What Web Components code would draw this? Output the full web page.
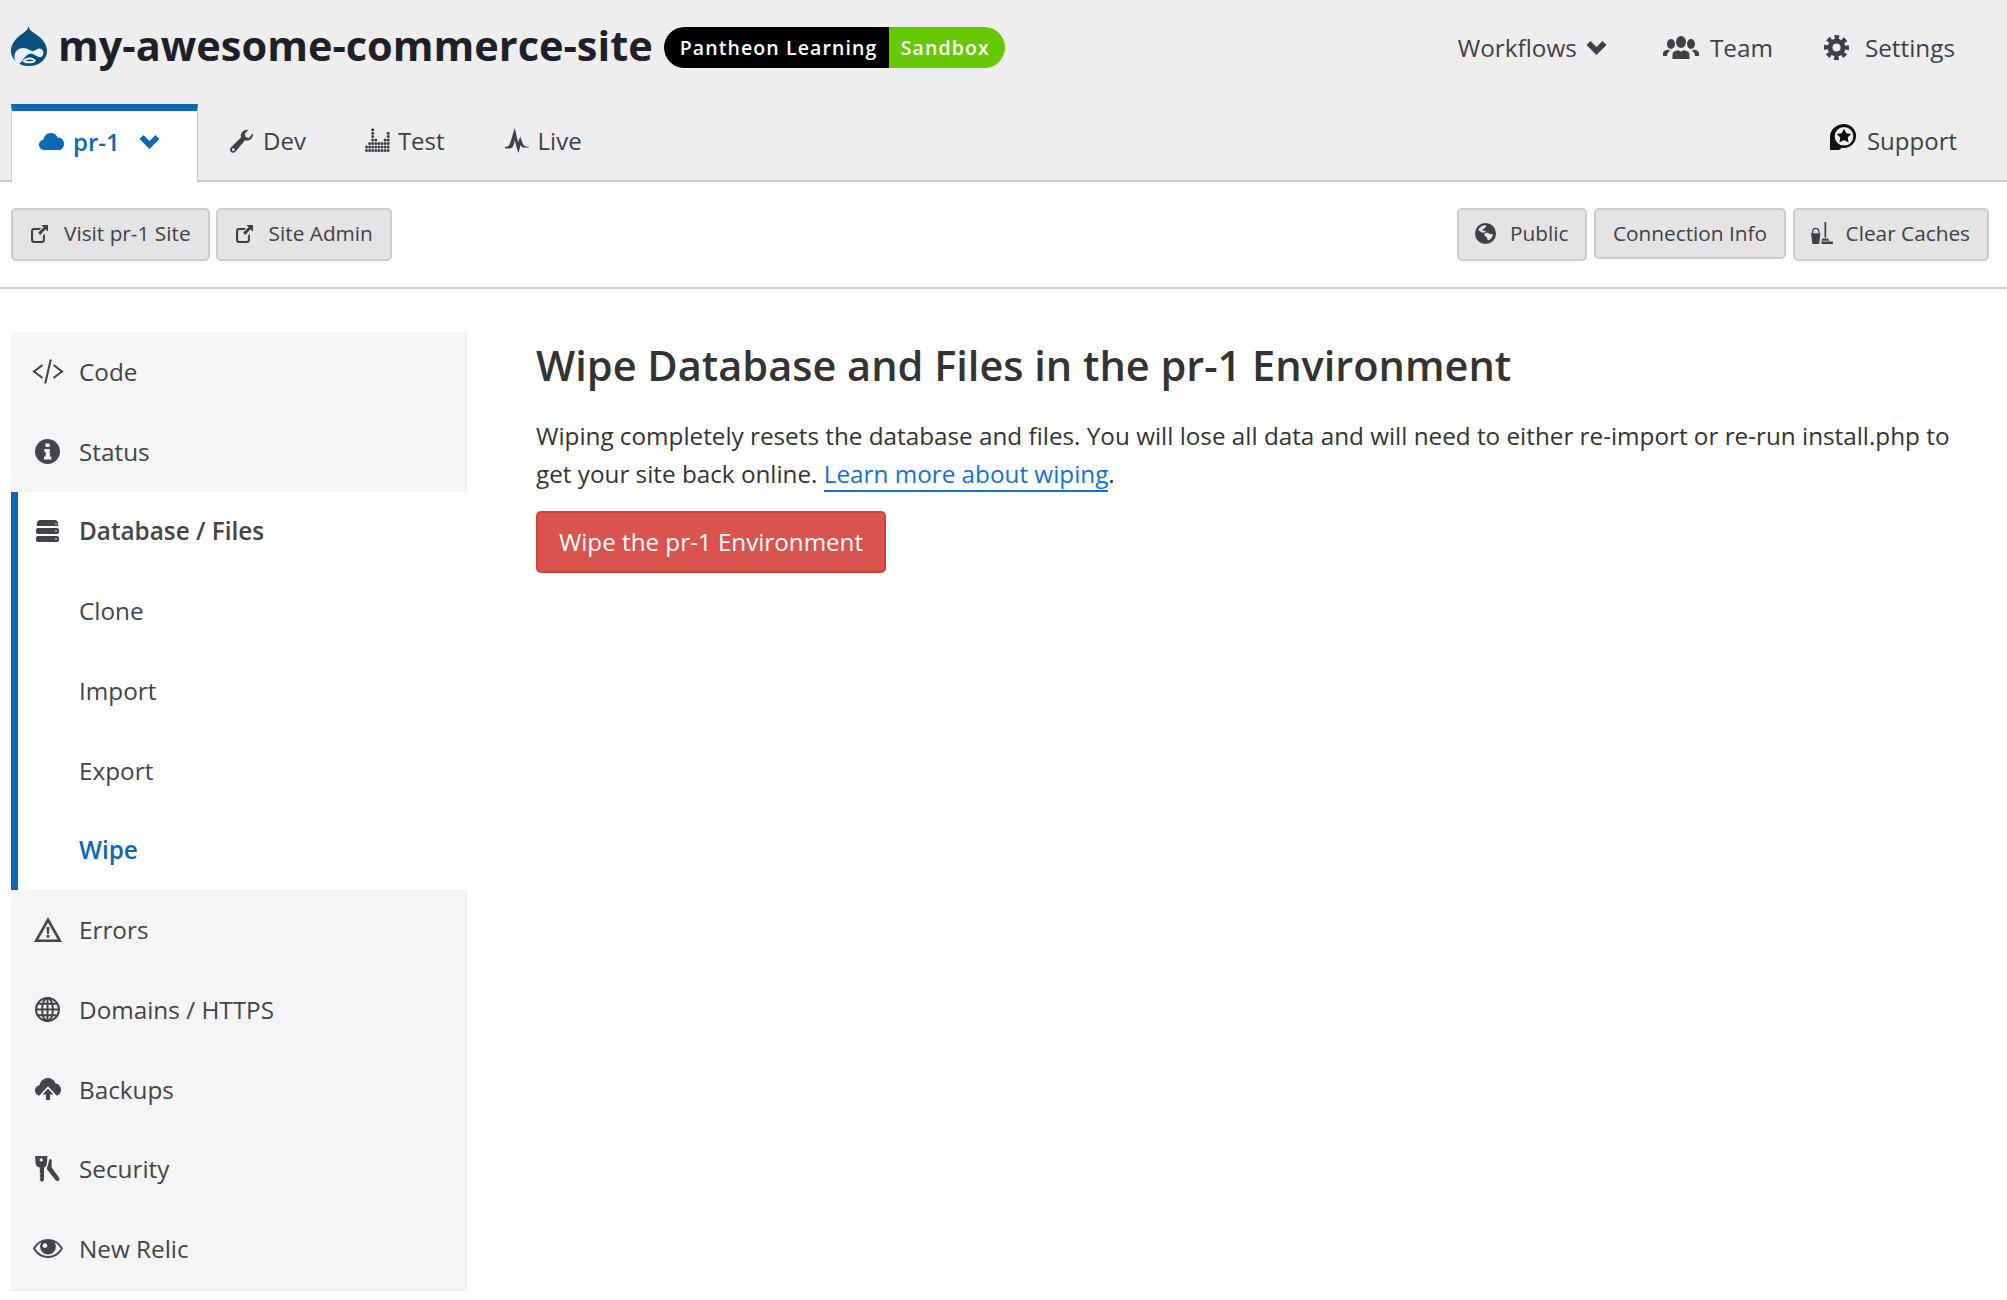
<!DOCTYPE html>
<html lang="en">
<head>
<meta charset="utf-8">
<title>my-awesome-commerce-site</title>
<style>
  html, body { margin: 0; background: #fff; }
  body { font-family: "Open Sans", "Liberation Sans", sans-serif; color: #3c3c3c; min-height: 1300px; }
</style>
</head>
<body>
<site-header></site-header>
<env-toolbar>
  <tool-button slot="left" icon="external" icon-w="17" gap="16">Visit pr-1 Site</tool-button>
  <tool-button slot="left" icon="external" icon-w="17" gap="16">Site Admin</tool-button>
  <tool-button slot="right" icon="earth" icon-w="21" gap="14" style="padding-left:16px">Public</tool-button>
  <tool-button slot="right" slim>Connection Info</tool-button>
  <tool-button slot="right" icon="broom" icon-w="22" gap="13" style="padding-left:16px">Clear Caches</tool-button>
</env-toolbar>
<work-space>
  <side-nav slot="nav">
    <nav-group>
      <nav-item icon="code">Code</nav-item>
      <nav-item icon="info">Status</nav-item>
    </nav-group>
    <nav-group active>
      <nav-item icon="database" strong>Database / Files</nav-item>
      <nav-item>Clone</nav-item>
      <nav-item>Import</nav-item>
      <nav-item>Export</nav-item>
      <nav-item current>Wipe</nav-item>
    </nav-group>
    <nav-group>
      <nav-item icon="warning">Errors</nav-item>
      <nav-item icon="globe">Domains / HTTPS</nav-item>
      <nav-item icon="cloud-up">Backups</nav-item>
      <nav-item icon="keys">Security</nav-item>
      <nav-item icon="eye">New Relic</nav-item>
    </nav-group>
  </side-nav>
  <wipe-panel></wipe-panel>
</work-space>

<script>
const ICONS = {
  drupal: ['0 0 36 40', `
    <path fill="#0a4f7e" d="M17.500 0c.3 3 2.500 5 5.500 7C30 11.500 36 17 36 25c0 8.800-8 15-18 15S0 33.800 0 25c0-7.500 5-13 11-17 3.500-2.300 6-4.500 6.500-8z"/>
    <path fill="#eef2f5" d="M8 38.500C3.500 36 3.200 32 3.500 29.500c.6-4.800 4.500-7.500 9-7.500 4 0 7 3.200 9.500 3 2.800-.2 4.500-3 7.500-2.300 2.800.7 3.800 4.500 2 7-1.800 2.400-4.500 1.300-6.800-.2-3-2-6.200-2.300-8.800-.3-2.500 2-3.500 4.300-4.300 5.300-.8 1-1.900 2-3.600 3.500z"/>
    <path fill="#eef2f5" d="M12 34.500c2.500-3.300 8-4.300 12-1.300 1.400 1 .9 2.500-1 3.200-3.300 1.200-7.500 1.200-10 0-1.300-.6-1.600-1.200-1-1.900z"/>
    <path fill="#0a4f7e" d="M14 34.600c2.800-1.500 6.200-1.700 9 0-2.800.9-6.200.9-9 0z"/>`],
  cloud: ['0 0 25 17', `<path fill="currentColor" d="M5.500 17C2.400 17 0 14.700 0 11.800c0-2.500 1.800-4.500 4.200-5C5 2.900 8 0 11.800 0c3.300 0 6 2 7 4.900.4-.1.800-.1 1.200-.1 2.800 0 5 2.700 5 6.100S22.600 17 19.800 17z"/>`],
  chevron: ['0 0 21 15', `<path fill="none" stroke="currentColor" stroke-width="5.600" d="M2.500 3l8 8 8-8"/>`],
  wrench: ['0 0 23 25', `<path fill="currentColor" fill-rule="evenodd" d="M22.700 5.200c.5 2.300-.2 4.600-1.900 6-1.600 1.400-3.800 1.700-5.700 1L5.600 23.600c-1.200 1.400-3.300 1.600-4.600.4-1.400-1.200-1.400-3.200-.2-4.500L11 9.600c-.6-2-.1-4.200 1.500-5.800C14 2 16.300 1.300 18.500 1.800l-3.700 3.800.8 3.500 3.400.9zM3.300 20.300a1.400 1.400 0 1 0 0 2.800 1.400 1.400 0 0 0 0-2.800z"/>`],
  bars: ['0 0 25 24', (() => {
    const heights = [2, 3, 7, 4, 3, 3, 4, 6];
    let dots = '';
    heights.forEach((h, c) => {
      for (let r = 0; r < h; r++) dots += `<circle cx="${1.500 + c * 3.100}" cy="${22.400 - r * 3.450}" r="1.500"/>`;
    });
    return `<g fill="currentColor">${dots}</g>`;
  })()],
  pulse: ['0 0 24 25', `<path fill="currentColor" d="M0 18.800c2.200 0 3.500-.3 4.500-2.300C6.200 13 7.800 6 9.700 0c1.300 4.500 2.500 11 3.500 14.500.6-2 1.500-4.500 2.200-6 .9 3 1.600 5.300 2.500 7.500.8 1.900 2.800 2.800 6.100 2.800v.7c-2.800 0-4.600.2-6 0-1.100-.2-1.900-1.200-2.500-2.800-.5 2.500-1.300 6-2.100 8.300-1.200-3.400-2.400-8-3.600-13-.5 3-1.200 5.500-2 6.800-.8 1.200-2 1.700-3.400 1.700H0z"/>`],
  users: ['0 0 36 23', `<g fill="currentColor">
    <ellipse cx="18" cy="6" rx="5" ry="6"/><path d="M9.500 23v-4.500c0-1.800 1.200-3 3-3.600l2.800-1c.8 1 1.700 1.500 2.700 1.500s1.900-.5 2.700-1.500l2.800 1c1.800.6 3 1.800 3 3.600V23z"/>
    <ellipse cx="8" cy="8" rx="4" ry="5"/><path d="M0 20v-2.500c0-1.500.8-2.500 2.300-3l2.600-1c.8.8 1.800 1.200 3.100 1.200-1 .4-1.700.8-2.300 1.300-1.200 1-1.600 2.300-1.700 4z"/>
    <ellipse cx="28" cy="8" rx="4" ry="5"/><path d="M36 20v-2.500c0-1.500-.8-2.500-2.300-3l-2.600-1c-.8.8-1.800 1.200-3.100 1.200 1 .4 1.700.8 2.300 1.300 1.200 1 1.600 2.300 1.700 4z"/></g>`],
  cog: ['0 0 25 25', `<g fill="none" stroke="currentColor"><circle cx="12.500" cy="12.500" r="6.500" stroke-width="5"/><circle cx="12.500" cy="12.500" r="10.300" stroke-width="4.400" stroke-dasharray="4.500 3.590" stroke-dashoffset="2.250"/></g>`],
  support: ['0 0 26 26', `<path fill="#111" fill-rule="evenodd" d="M14 0a12 12 0 0 1 12 12c0 6.800-5.400 12-12 12-1 0-1.800-.1-2.600-.3-.7 1.500-1.800 2.300-3.400 2.300H0V13C0 5.500 6.500 0 14 0zm0 3a9.300 9.300 0 1 0 0 18.600A9.300 9.300 0 0 0 14 3z"/>
    <path fill="#111" d="M14 4.800l2.300 4.500 5 .7-3.600 3.500.9 5-4.600-2.400-4.600 2.400.9-5L6.700 10l5-.7z"/>`],
  external: ['0 0 17 19', `<g fill="currentColor"><path d="M2.800 4h7.400l-1.900 2H3.300c-.7 0-1.200.5-1.200 1.200v8.500c0 .7.500 1.200 1.200 1.200h7.400c.7 0 1.200-.5 1.200-1.200v-4l2-2v6.300c0 1.700-1.300 3-3 3H2.800c-1.600 0-2.800-1.300-2.800-3V7c0-1.700 1.200-3 2.800-3z"/><path d="M10.500 1H17v6.500l-2.400-2.300-5.400 5.700-2.100-2.100 5.500-5.500z"/></g>`],
  earth: ['0 0 21 21', `<path fill="currentColor" d="M10.500 0a10.500 10.500 0 1 0 0 21 10.500 10.500 0 0 0 0-21zM7 3c1.500-.8 3-.9 4.300-.5.500.6-.2 1.600-1.200 2-.9.400-.8 1.500-1.800 1.700-1 .2-.8 1.300-.2 1.700.9.500 1.900-.5 2.500.2.500.6-.7.900-1.200 1.300-1 .7-2.300.1-3-.2C5 8.200 4 7.200 3.300 7.200 3.800 5.500 5.200 4 7 3zm11 8.500c-.3 1.700-1.300 3.500-2.600 4.800-.9.800-1.900 1.200-2.700.8-.5-1-.2-2.500-1.200-3.200-1-.6-2-.7-2.200-1.900-.2-1.200.7-2.100 1.900-2.200 1.500-.2 2.800.6 3.800 1.100 1 .4 2.100 0 3 .6z"/>`],
  broom: ['0 0 22 22', `<g fill="currentColor"><path d="M13.500 0h1.700v15.500h-1.700z"/><path d="M11.500 16.500h5.700l1 2.200h-7.700zM10.500 19.500H22V22H10.500z"/><path d="M0 11.200h9.500l-1.400 10.800H1.400z"/><path fill="none" stroke="currentColor" stroke-width="1.300" d="M1.500 11c0-3 1.300-4.600 3.200-4.600S8 8 8 11"/></g>`],
  code: ['0 0 32 25', `<path fill="none" stroke="currentColor" stroke-width="2.100" d="M10.500 6L2 12.500l8.500 6.500M21.500 6L30 12.500 21.500 19M18.800 .5l-5.600 24"/>`],
  info: ['0 0 25 25', `<path fill="currentColor" fill-rule="evenodd" d="M12.500 0a12.500 12.500 0 1 0 0 25 12.500 12.500 0 0 0 0-25zm-2 4.500h4.200v3.600h-4.200zm-1.200 5.600h5.500v7.500h1.600v2.900H9v-2.900h1.700v-4.600H9.300z"/>`],
  database: ['0 0 23 22', `<g fill="currentColor"><path d="M4 0h15c1.500 0 2.500 1 3 2.500l.3 3.500H.7L1 2.500C1.500 1 2.500 0 4 0z"/><rect y="8" x="0" width="23" height="6" rx="2"/><rect y="16" x="0" width="23" height="6" rx="2"/></g><g fill="#fff"><circle cx="20" cy="4" r=".8"/><circle cx="20" cy="11" r=".8"/><circle cx="20" cy="19" r=".8"/></g>`],
  warning: ['0 0 28 25', `<path fill="currentColor" fill-rule="evenodd" d="M14 0l14 25H0zm0 5.500L4.400 22.500h19.200zM12.500 10h3l-.6 7h-1.800zM12.600 18h2.800v2.800h-2.800z"/>`],
  globe: ['0 0 25 25', `<g fill="none" stroke="currentColor" stroke-width="2"><circle cx="12.500" cy="12.500" r="11.500"/><ellipse cx="12.500" cy="12.500" rx="5.400" ry="11.500"/><path d="M12.500 1v23M1 12.500h23M2.600 6.800h19.800M2.600 18.200h19.800"/></g>`],
  'cloud-up': ['0 0 26 23', `<path fill="currentColor" d="M6 18c-3.300 0-6-2.500-6-5.500C0 9.800 2 7.500 4.600 7 5.500 3 8.800 0 12.800 0c3.600 0 6.700 2.300 7.700 5.500 3.200.1 5.500 2.900 5.500 6.200 0 3.500-2.700 6.300-6 6.300z"/><path fill="currentColor" stroke="#f5f5f5" stroke-width="1.800" d="M13 9.500l7.500 8h-4.500V23h-6v-5.500H5.500z"/>`],
  keys: ['0 0 25 26', `<g fill="currentColor"><path d="M0 0h12.500l-.8 8.500c-.4 1.500-1.300 2.600-2.700 3.100V24l-2 2-2.200-2v-1.300l1-1.200-1-1v-1.500l1-1-1-1v-5.400C2.300 11 1.200 9.500.7 8zm6.200 2.200a1.700 1.700 0 1 0 0 3.400 1.700 1.700 0 0 0 0-3.400z"/><path d="M14.500 3l2.300.8-.3 7.500 7.500 10.200c.9 1.300.6 3-1 3.500-1.200.3-2-.3-2.700-1.300l-7.800-9.700c-.6-.7-.7-1.600-.4-2.300z"/></g>`],
  eye: ['0 0 30 19', `<path fill="currentColor" fill-rule="evenodd" d="M15 0c6.500 0 11.800 3.800 15 9.500C26.800 15.200 21.500 19 15 19S3.200 15.200 0 9.500C3.200 3.800 8.500 0 15 0zM8.500 3.400C5.700 4.700 3.700 6.800 2.200 9.500c2.800 4.500 7.300 7.500 12.800 7.500s10-3 12.800-7.500c-1.500-2.700-3.500-4.800-6.300-6.100.9 1.200 1.400 2.700 1.400 4.300a7.900 7.900 0 0 1-15.800 0c0-1.600.5-3.100 1.400-4.300zM12 4.200c-1.400 0-2.400 1-2.400 2.400s1 2.300 2.400 2.300 2.300-1 2.300-2.300-1-2.400-2.300-2.400z"/>`]
};

function iconSvg(name, w) {
  const [box, body] = ICONS[name];
  const [, , bw, bh] = box.split(' ').map(Number);
  const width = w || bw;
  return `<svg xmlns="http://www.w3.org/2000/svg" viewBox="${box}" width="${width}" height="${width * bh / bw}" style="display:block" aria-hidden="true">${body}</svg>`;
}

// small helper so each element only states its styles and markup
function define(tag, render) {
  customElements.define(tag, class extends HTMLElement {
    connectedCallback() {
      if (this.shadowRoot) return;
      this.attachShadow({ mode: 'open' });
      this.shadowRoot.innerHTML = render(this);
    }
  });
}

define('ui-icon', el => `
  <style>:host { display: inline-flex; align-items: center; justify-content: center; flex: none; color: inherit; }</style>
  ${iconSvg(el.getAttribute('name'), Number(el.getAttribute('w')) || 0)}
`);

define('status-badge', () => `
  <style>
    :host { display: inline-flex; height: 41px; margin-top: 1px; border-radius: 21px; overflow: hidden; font-size: 19.500px; font-weight: 600; letter-spacing: 1.100px; color: #fff; }
    span { display: flex; align-items: center; }
    .plan { background: #000; padding: 0 13px 0 16px; width: 225px; box-sizing: border-box; white-space: nowrap; }
    .level { background: #66c800; padding: 0 0 0 12px; width: 116px; box-sizing: border-box; }
  </style>
  <span class="plan"><slot name="plan"></slot></span><span class="level"><slot name="level"></slot></span>
`);

define('top-link', el => `
  <style>
    :host { display: inline-flex; align-items: center; font-size: var(--link-size, 24px); color: #3f3f46; white-space: nowrap; }
    ui-icon { margin-right: ${el.getAttribute('gap') || 10}px; }
  </style>
  ${el.getAttribute('icon') ? `<ui-icon name="${el.getAttribute('icon')}" w="${el.getAttribute('icon-w') || ''}"></ui-icon>` : ''}<slot></slot>
`);

define('site-header', () => `
  <style>
    :host { display: block; background: #eee; height: 180px; border-bottom: 2px solid #ccc; }
    .brand { display: flex; align-items: center; height: 104px; padding: 0 52px 10px 11px; box-sizing: border-box; --link-size: 24.300px; }
    .logo { position: relative; top: -1px; }
    h1 { margin: 0 11px 0 11px; font-size: 41.500px; font-weight: 700; color: #1f1f2b; line-height: 1; white-space: nowrap; position: relative; top: -1px; }
    .links { margin-left: auto; display: flex; align-items: center; gap: 51px; }
    .wf { display: inline-flex; align-items: center; gap: 9px; }
    .tabs { display: flex; align-items: stretch; height: 78px; padding: 0 50px 0 11px; }
    .active { box-sizing: border-box; width: 187px; height: 78px; background: #fff; border-top: 7px solid #0c68b7; color: #0c68b7; font-size: 24px; font-weight: 600; display: flex; align-items: center; padding: 0 0 10px 27px; border-left: 1px solid #ccc; border-right: 1px solid #ccc; }
    .active ui-icon:first-child { margin-right: 9px; }
    .active ui-icon:last-child { margin-left: 19px; }
    .tab { display: flex; align-items: center; padding-bottom: 6px; }
    .push { margin-left: auto; }
  </style>
  <div class="brand">
    <ui-icon class="logo" name="drupal"></ui-icon>
    <h1>my-awesome-commerce-site</h1>
    <status-badge><span slot="plan">Pantheon Learning</span><span slot="level">Sandbox</span></status-badge>
    <div class="links">
      <top-link><span class="wf">Workflows <ui-icon name="chevron"></ui-icon></span></top-link>
      <top-link icon="users" gap="11" style="margin-left:5px">Team</top-link>
      <top-link icon="cog" gap="16">Settings</top-link>
    </div>
  </div>
  <nav class="tabs">
    <div class="active"><ui-icon name="cloud"></ui-icon>pr-1<ui-icon name="chevron"></ui-icon></div>
    <top-link class="tab" icon="wrench" gap="10" style="margin-left:32px">Dev</top-link>
    <top-link class="tab" icon="bars" gap="8" style="margin-left:59px">Test</top-link>
    <top-link class="tab" icon="pulse" gap="9" style="margin-left:60px">Live</top-link>
    <top-link class="tab push" icon="support" gap="11" style="align-items:flex-start;padding-top:20px"><span>Support</span></top-link>
  </nav>
`);

define('tool-button', el => `
  <style>
    :host { display: inline-flex; align-items: center; box-sizing: border-box; height: ${el.hasAttribute('slim') ? 51 : 53}px; padding: ${el.hasAttribute('slim') ? '0 16.500px 1px' : '0 17px 3px 18px'}; background: #e4e4e4; border: 2px solid #ccc; border-radius: 5px; font-size: 20.800px; color: #3f3f46; white-space: nowrap; }
    ui-icon { margin-right: ${el.getAttribute('gap') || 0}px; }
  </style>
  ${el.getAttribute('icon') ? `<ui-icon name="${el.getAttribute('icon')}" w="${el.getAttribute('icon-w')}"></ui-icon>` : ''}<slot></slot>
`);

define('env-toolbar', () => `
  <style>
    :host { display: flex; justify-content: space-between; align-items: flex-start; box-sizing: border-box; height: 107px; padding: 26px 18px 0 11px; border-bottom: 2px solid #ccc; }
    div { display: flex; align-items: flex-start; gap: 7px; }
    .start { gap: 6px; }
  </style>
  <div class="start"><slot name="left"></slot></div>
  <div><slot name="right"></slot></div>
`);

define('work-space', () => `
  <style>
    :host { display: flex; align-items: flex-start; padding: 43px 40px 0 11px; gap: 69px; }
    .nav { flex: none; width: 456px; }
    .main { flex: 1; min-width: 0; }
  </style>
  <div class="nav"><slot name="nav"></slot></div>
  <div class="main"><slot></slot></div>
`);

define('side-nav', () => `
  <style>:host { display: block; border-bottom: 2px solid #eee; }</style>
  <slot></slot>
`);

define('nav-group', el => `
  <style>
    :host { display: block; background: #f5f5f5; border-right: 2px solid #efefef; box-sizing: border-box; --nav-inset: 21px; }
    :host([active]) { background: #fff; border-right-color: transparent; border-left: 7px solid #0c68b7; --nav-inset: 14px; }
  </style>
  <slot></slot>
`);

define('nav-item', el => `
  <style>
    :host { display: flex; align-items: center; box-sizing: border-box; height: 79.750px; padding: 0 0 1px var(--nav-inset); font-size: 24.300px; color: #43434a; white-space: nowrap; }
    :host([strong]) { font-weight: 600; }
    :host([current]) { font-weight: 600; color: #0c68b7; }
    .slot-icon { display: flex; align-items: center; justify-content: center; width: 31px; margin-right: 16px; flex: none; }
  </style>
  <span class="slot-icon">${el.getAttribute('icon') ? `<ui-icon name="${el.getAttribute('icon')}"></ui-icon>` : ''}</span><slot></slot>
`);

define('wipe-panel', () => `
  <style>
    :host { display: block; color: #333; }
    h2 { margin: 0; padding-top: 3px; font-size: 41.500px; font-weight: 600; line-height: 60px; color: #333; }
    p { margin: 22px 0 0; font-size: 24.270px; line-height: 38px; color: #333; white-space: nowrap; }
    a { color: #0f72d6; text-decoration: none; border-bottom: 2px solid #0f72d6; }
    button { display: block; margin: 18px 0 0; width: 350px; height: 62px; padding: 0 0 2px; background: #d9534f; border: 2px solid #d43f3a; border-radius: 5px; color: #fff; font: 500 24.200px "Open Sans", "Liberation Sans", sans-serif; }
  </style>
  <h2>Wipe Database and Files in the pr-1 Environment</h2>
  <p><span>Wiping completely resets the database and files. You will lose all data and will need to either re-import or re-run install.php to</span><br><span>get your site back online.</span> <a href="#">Learn more about wiping</a><span>.</span></p>
  <button type="button">Wipe the pr-1 Environment</button>
`);
</script>
</body>
</html>
